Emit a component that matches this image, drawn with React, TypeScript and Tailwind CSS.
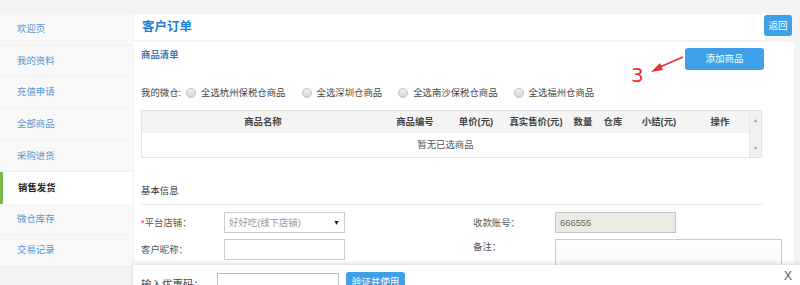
const font = { fontFamily: '"Liberation Sans", "Noto Sans CJK SC", sans-serif' }

const menu = ['欢迎页', '我的资料', '充值申请', '全部商品', '采购进货', '销售发货', '微仓库存', '交易记录']

const cols = [
  { label: '商品名称', w: 'w-[242px]' },
  { label: '商品编号', w: 'w-[62px]' },
  { label: '单价(元)', w: 'w-[60px]' },
  { label: '真实售价(元)', w: 'w-[60px]' },
  { label: '数量', w: 'w-[34px]' },
  { label: '仓库', w: 'w-[26px]' },
  { label: '小结(元)', w: 'w-[66px]' },
  { label: '操作', w: 'w-[56px]' },
]

const warehouses = ['全选杭州保税仓商品', '全选深圳仓商品', '全选南沙保税仓商品', '全选福州仓商品']

function Radio({ label }: { label: string }) {
  return (
    <label className="flex items-center gap-[5px] mr-[16px]">
      <span className="w-[10px] h-[10px] rounded-full border border-[#bdbdbd] bg-gradient-to-b from-[#f4f4f4] to-[#d4d4d4]" />
      <span>{label}</span>
    </label>
  )
}

export default function App() {
  return (
    <div className="relative w-[800px] h-[285px] overflow-hidden bg-[#f4f4f4] pt-[14px] text-[9.4px] leading-[14px] text-[#333]" style={font}>
      <div className="flex">
        {/* sidebar */}
        <div className="w-[133px] shrink-0 h-[253px] bg-[#f8f8f8]">
          {menu.map((m) => {
            const active = m === '销售发货'
            return (
              <div
                key={m}
                className={
                  active
                    ? 'h-[31.6px] flex items-center pl-[15px] bg-white border-l-[3px] border-[#7bb84a] font-bold text-[#222]'
                    : 'h-[31.6px] flex items-center pl-[17px] border-b border-[#f0f0f0] text-[#5595d6]'
                }
              >
                {m}
              </div>
            )
          })}
        </div>

        {/* main */}
        <div className="flex-1 ml-[1px]">
          <div className="flex items-start">
            <div className="w-[631px] h-[26px] bg-white flex items-center pl-[8px] text-[12.5px] font-bold text-[#1f7fd6]">
              客户订单
            </div>
            <button className="ml-[-1px] mt-[1px] w-[28px] h-[21px] rounded-[3px] bg-[#3da0e8] text-white text-[9.5px]">
              返回
            </button>
          </div>
          <div className="mt-[2px] w-[660px] h-[260px] bg-white pl-[7px] pr-[31px]">
            <div className="flex justify-between pt-[6px]">
              <div className="text-[9.4px] font-bold text-[#3f78b8]">商品清单</div>
              <button className="mr-[-1px] w-[79px] h-[22px] rounded-[3px] bg-[#3da0e8] text-white text-[9.5px]">
                添加商品
              </button>
            </div>
            <div className="flex items-center h-[14px] mt-[16px] text-[#444]">
              <span className="mr-[5px]">我的微仓:</span>
              {warehouses.map((w) => (
                <Radio key={w} label={w} />
              ))}
            </div>
            <div className="mt-[10px] w-[621px] flex border border-[#e2e2e2]">
              <div className="flex-1">
                <div className="h-[22px] bg-[#f4f4f4] flex items-center font-bold text-[#444]">
                  {cols.map((c) => (
                    <div key={c.label} className={`${c.w} text-center`}>
                      {c.label}
                    </div>
                  ))}
                </div>
                <div className="h-[24px] flex items-center justify-center text-[#555]">暂无已选商品</div>
              </div>
              <div className="w-[12px] bg-[#f1f1f1] border-l border-[#e6e6e6] flex flex-col justify-between items-center text-[5px] leading-[6px] text-[#999] py-[6px]">
                <span>▲</span>
                <span>▼</span>
              </div>
            </div>
            <div className="mt-[26px] pb-[6px] border-b border-[#e8e8e8] text-[#333]">基本信息</div>
            <div className="grid grid-cols-[332px_1fr] items-start mt-[7px] gap-y-[6px] text-[#555]">
              <div className="flex items-center">
                <span className="w-[83px]">
                  <span className="text-[#e33]">*</span>平台店铺：
                </span>
                <div className="w-[121px] h-[21px] border border-[#ccc] flex items-center justify-between px-[4px] text-[#999]">
                  <span>好好吃(线下店铺)</span>
                  <span className="text-[7px] text-[#222]">▼</span>
                </div>
              </div>
              <div className="flex items-center">
                <span className="w-[82px]">收款账号：</span>
                <div className="w-[121px] h-[21px] border border-[#c4c4c4] bg-[#ebebe4] flex items-center px-[4px] text-[#666]">
                  666555
                </div>
              </div>
              <div className="flex items-center">
                <span className="w-[83px]">客户昵称：</span>
                <div className="w-[121px] h-[21px] border border-[#ccc]" />
              </div>
              <div className="flex items-start">
                <span className="w-[82px] pt-[1px]">备注：</span>
                <div className="w-[227px] h-[40px] border border-[#ccc] bg-gradient-to-b from-white to-[#f6f6f6]" />
              </div>
            </div>
          </div>
        </div>
      </div>

      {/* annotation */}
      <div className="absolute left-[631px] top-[63px] text-[20px] leading-[24px] text-[#e63030]" style={{ fontFamily: '"DejaVu Sans", sans-serif' }}>
        3
      </div>
      <svg className="absolute left-[648px] top-[54px]" width="36" height="22" viewBox="0 0 36 22">
        <path d="M35 3 L12 13" stroke="#e63030" strokeWidth="1.6" fill="none" />
        <path d="M3 18 L12 9 L15 16 Z" fill="#e63030" />
      </svg>

      {/* coupon bar */}
      <div className="absolute left-[133px] right-0 top-[265px] h-[30px] bg-white shadow-[0_-2px_4px_rgba(0,0,0,0.12)] flex items-start pl-[8px] pt-[8px] text-[10.5px] text-[#444]">
        <span className="w-[76px] mt-[4px]">输入优惠码：</span>
        <div className="w-[122px] h-[20px] border border-[#bbb]" />
        <button className="ml-[7px] w-[59px] h-[22px] -mt-[1px] rounded-[3px] bg-[#3da0e8] text-white text-[9.5px] flex items-start justify-center pt-[3px]">
          验证并使用
        </button>
        <span className="ml-auto mr-[8px] -mt-[4px] text-[12px] text-[#555]">X</span>
      </div>
    </div>
  )
}
